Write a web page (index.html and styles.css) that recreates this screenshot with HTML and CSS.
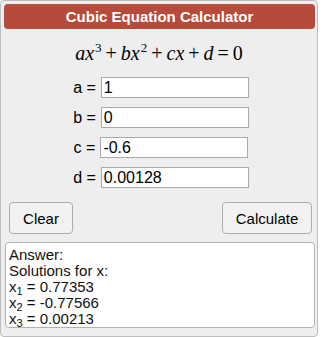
FILE: index.html
```html
<!DOCTYPE html>
<html lang="en">
<head>
    <meta charset="UTF-8">
    <title>Cubic Equation Calculator</title>
    <link rel="stylesheet" href="styles.css">
</head>
<body>
    <div class="calc">
        <div class="calc-title">Cubic Equation Calculator</div>
        <div class="equation"><i>ax</i><sup>3</sup><span class="op">+</span><i>bx</i><sup>2</sup><span class="op">+</span><i>cx</i><span class="op">+</span><i>d</i><span class="op">=</span>0</div>
        <div class="coef-row">
            <label>a =</label>
            <input type="text" value="1">
        </div>
        <div class="coef-row">
            <label>b =</label>
            <input type="text" value="0">
        </div>
        <div class="coef-row">
            <label>c =</label>
            <input type="text" value="-0.6">
        </div>
        <div class="coef-row">
            <label>d =</label>
            <input type="text" value="0.00128">
        </div>
        <div class="button-row">
            <button class="btn btn-clear">Clear</button>
            <button class="btn btn-calc">Calculate</button>
        </div>
        <div class="answer">
            <div>Answer:</div>
            <div>Solutions for x:</div>
            <div>x<sub>1</sub> = 0.77353</div>
            <div>x<sub>2</sub> = -0.77566</div>
            <div>x<sub>3</sub> = 0.00213</div>
        </div>
    </div>
</body>
</html>
```

FILE: styles.css
```css
/* Page reset */
html, body {
    margin: 0;
    padding: 0;
    background-color: #ffffff;
    font-family: 'Liberation Sans', Arial, sans-serif;
}
/* Outer calculator box */
.calc {
    width: 318px;
    height: 337px;
    box-sizing: border-box;
    border: 1px solid #bdbdbd;
    border-radius: 4px;
    background-color: #eeeeee;
    padding: 3px 0 0 0;
}
/* Red title bar */
.calc-title {
    margin: 0 2px 0 3px;
    height: 25px;
    line-height: 25px;
    border-radius: 4px;
    background-color: #b64a3b;
    color: #ffffff;
    font-size: 15px;
    font-weight: bold;
    text-align: center;
}
.equation {
    height: 48px;
    line-height: 48px;
    text-align: center;
    font-family: 'Liberation Serif', 'Times New Roman', serif;
    font-size: 20px;
    color: #000000;
}
.equation .op {
    margin: 0 4px;
}
.equation sup {
    font-size: 13px;
    line-height: 0;
    margin-left: 1px;
}
/* Coefficient inputs */
.coef-row {
    display: flex;
    justify-content: center;
    align-items: center;
    height: 21px;
    margin-bottom: 9px;
    padding-left: 4px;
    font-size: 16px;
    color: #000000;
}
.coef-row label {
    margin-right: 5px;
}
.coef-row input {
    width: 148px;
    height: 21px;
    box-sizing: border-box;
    border: 1px solid #a9a9a9;
    padding: 0 2px;
    font-family: 'Liberation Sans', Arial, sans-serif;
    font-size: 16px;
    color: #000000;
    background-color: #ffffff;
    outline: none;
}
/* Buttons */
.button-row {
    display: flex;
    justify-content: space-between;
    margin-top: 14px;
    padding: 0 5px 0 8px;
}
.btn {
    height: 32px;
    box-sizing: border-box;
    border: 1px solid #adadad;
    border-radius: 4px;
    background-color: #f2f2f2;
    font-family: 'Liberation Sans', Arial, sans-serif;
    font-size: 15px;
    color: #000000;
    cursor: pointer;
}
.btn-clear {
    width: 64px;
}
.btn-calc {
    width: 90px;
}
/* Answer output */
.answer {
    margin: 8px 2px 0 4px;
    height: 86px;
    box-sizing: border-box;
    border: 1px solid #b3b3b3;
    border-radius: 4px;
    background-color: #ffffff;
    padding: 4px 3px;
    font-size: 15px;
    line-height: 16px;
    color: #111111;
}
.answer sub {
    font-size: 11px;
    line-height: 0;
    vertical-align: -3px;
}
```
